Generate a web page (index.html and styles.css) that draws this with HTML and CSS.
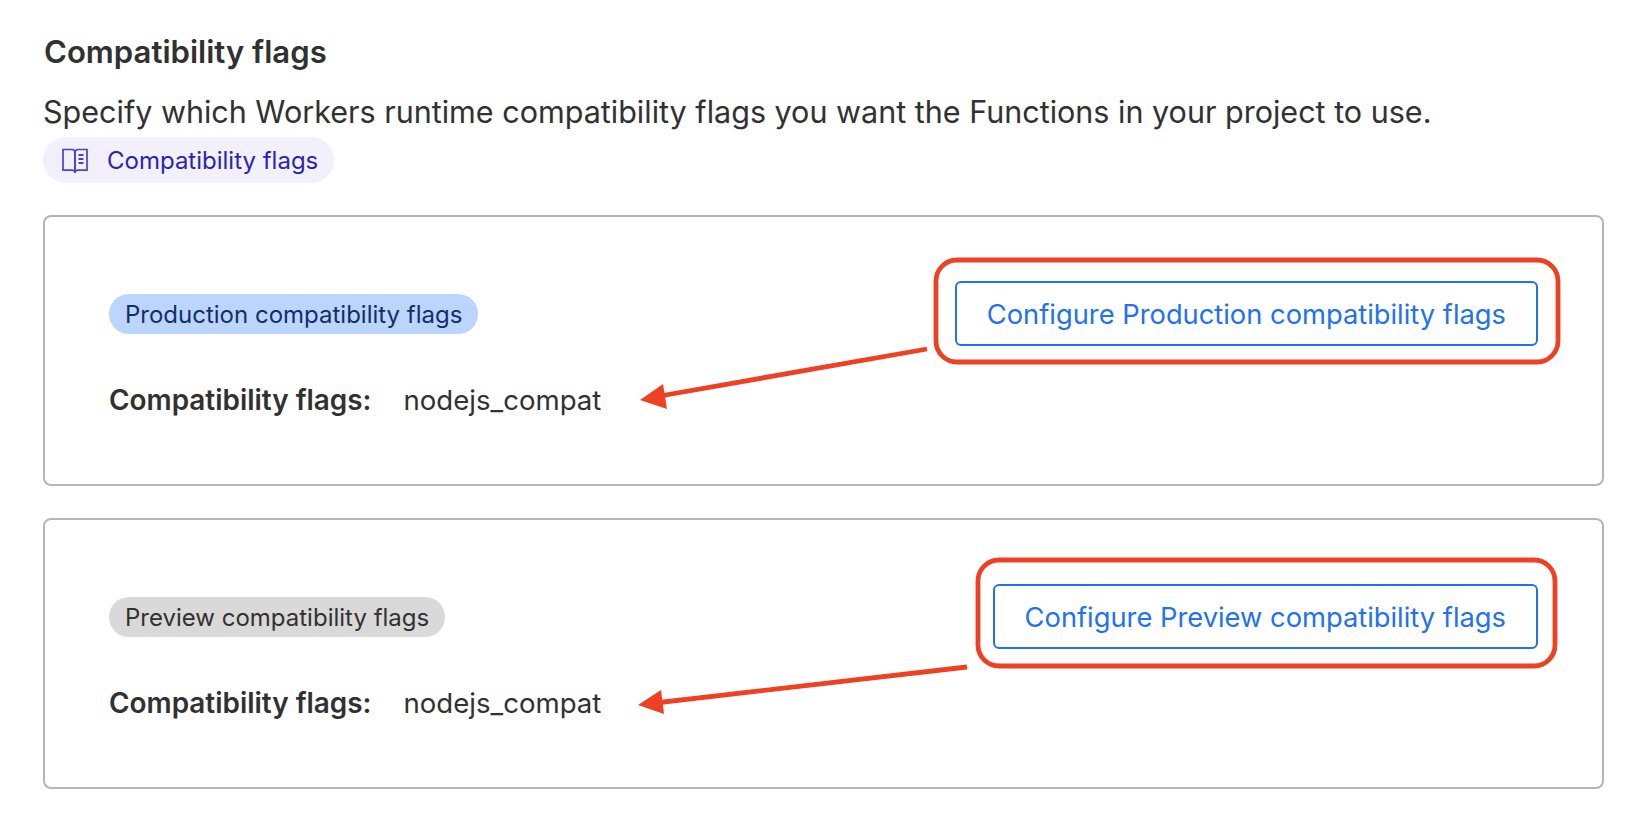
FILE: index.html
```html
<!DOCTYPE html>
<html lang="en">
<head>
<meta charset="utf-8">
<title>Compatibility flags</title>
<link rel="stylesheet" href="styles.css">
</head>
<body>
<main class="page">
  <h2 class="title">Compatibility flags</h2>
  <p class="desc">Specify which Workers runtime compatibility flags you want the Functions in your project to use.</p>
  <a class="doc-pill">
    <svg class="doc-icon" viewBox="0 0 26 25" fill="none" stroke="currentColor" stroke-width="1.7">
      <path d="M1 1.500h9c1.700 0 3 1.200 3 2.800V24c-.6-1-1.500-1.800-3-1.800H1z"/>
      <path d="M25 1.500h-9c-1.700 0-3 1.200-3 2.800V24c.6-1 1.500-1.800 3-1.800h9z"/>
      <path d="M16.500 7h5M16.500 11h5M16.500 15h5" stroke-width="1.900"/>
    </svg>
    <span>Compatibility flags</span>
  </a>

  <section class="card">
    <div class="card-head">
      <span class="env env-prod">Production compatibility flags</span>
      <button class="cfg">Configure Production compatibility flags</button>
    </div>
    <div class="kv"><strong>Compatibility flags:</strong><span class="kv-value">nodejs_compat</span></div>
  </section>

  <section class="card">
    <div class="card-head">
      <span class="env env-prev">Preview compatibility flags</span>
      <button class="cfg">Configure Preview compatibility flags</button>
    </div>
    <div class="kv"><strong>Compatibility flags:</strong><span class="kv-value">nodejs_compat</span></div>
  </section>
</main>

<svg class="marks" width="1642" height="826" viewBox="0 0 1642 826" fill="none">
  <rect x="936" y="260" width="622" height="102" rx="21" stroke="#EE4023" stroke-width="4.800"/>
  <rect x="978" y="560" width="577" height="106" rx="21" stroke="#EE4023" stroke-width="4.800"/>
  <path d="M927 349 L660 396" stroke="#EE4023" stroke-width="4.800"/>
  <path d="M640 400 L663 384 L667 409 Z" fill="#EE4023"/>
  <path d="M967 667 L655 703" stroke="#EE4023" stroke-width="4.800"/>
  <path d="M638 705 L661 690 L664 714 Z" fill="#EE4023"/>
</svg>
</body>
</html>
```

FILE: styles.css
```css
* { box-sizing: border-box; }
html, body { margin: 0; background: #fff; }
body {
  width: 1642px;
  height: 826px;
  overflow: hidden;
  position: relative;
  font-family: Inter, "Liberation Sans", sans-serif;
  color: #313131;
}
.page { padding: 34px 38px 0 43px; }
.title { margin: 0 0 0 1px; font-size: 31.1px; line-height: 36px; font-weight: 600; }
.desc { margin: 23px 0 0 0; font-size: 30.53px; line-height: 38px; font-weight: 400; white-space: nowrap; }
.doc-pill {
  display: inline-flex;
  align-items: center;
  gap: 19px;
  height: 46px;
  margin-top: 6px;
  padding: 0 16px 0 19px;
  border-radius: 23px;
  background: #f1f0fb;
  color: #2a25b0;
  font-size: 24px;
}
.doc-icon { width: 26px; height: 25px; flex: none; color: #4643cf; }
.card {
  height: 271px;
  margin-top: 32px;
  padding: 64px;
  border: 2px solid #b5b5b5;
  border-radius: 8px;
}
.card-head { display: flex; justify-content: space-between; align-items: center; height: 65px; }
.env {
  display: inline-flex;
  align-items: center;
  height: 40px;
  padding: 1px 16px 0;
  border-radius: 20px;
  font-size: 24px;
  white-space: nowrap;
}
.env-prod { background: #bcd5fc; color: #0f2f6d; }
.env-prev { background: #d9d9d9; color: #313131; }
.cfg {
  height: 65px;
  padding: 2px 30px 0;
  border: 2px solid #2271f0;
  border-radius: 6px;
  background: #fff;
  color: #2271f0;
  font: 400 27.3px Inter, "Liberation Sans", sans-serif;
  white-space: nowrap;
}
.kv { display: flex; gap: 32px; margin-top: 36px; font-size: 27.9px; line-height: 36px; }
.kv strong { font-weight: 600; }
.kv-value { font-size: 27.6px; }
.marks { position: absolute; left: 0; top: 0; pointer-events: none; }
```
